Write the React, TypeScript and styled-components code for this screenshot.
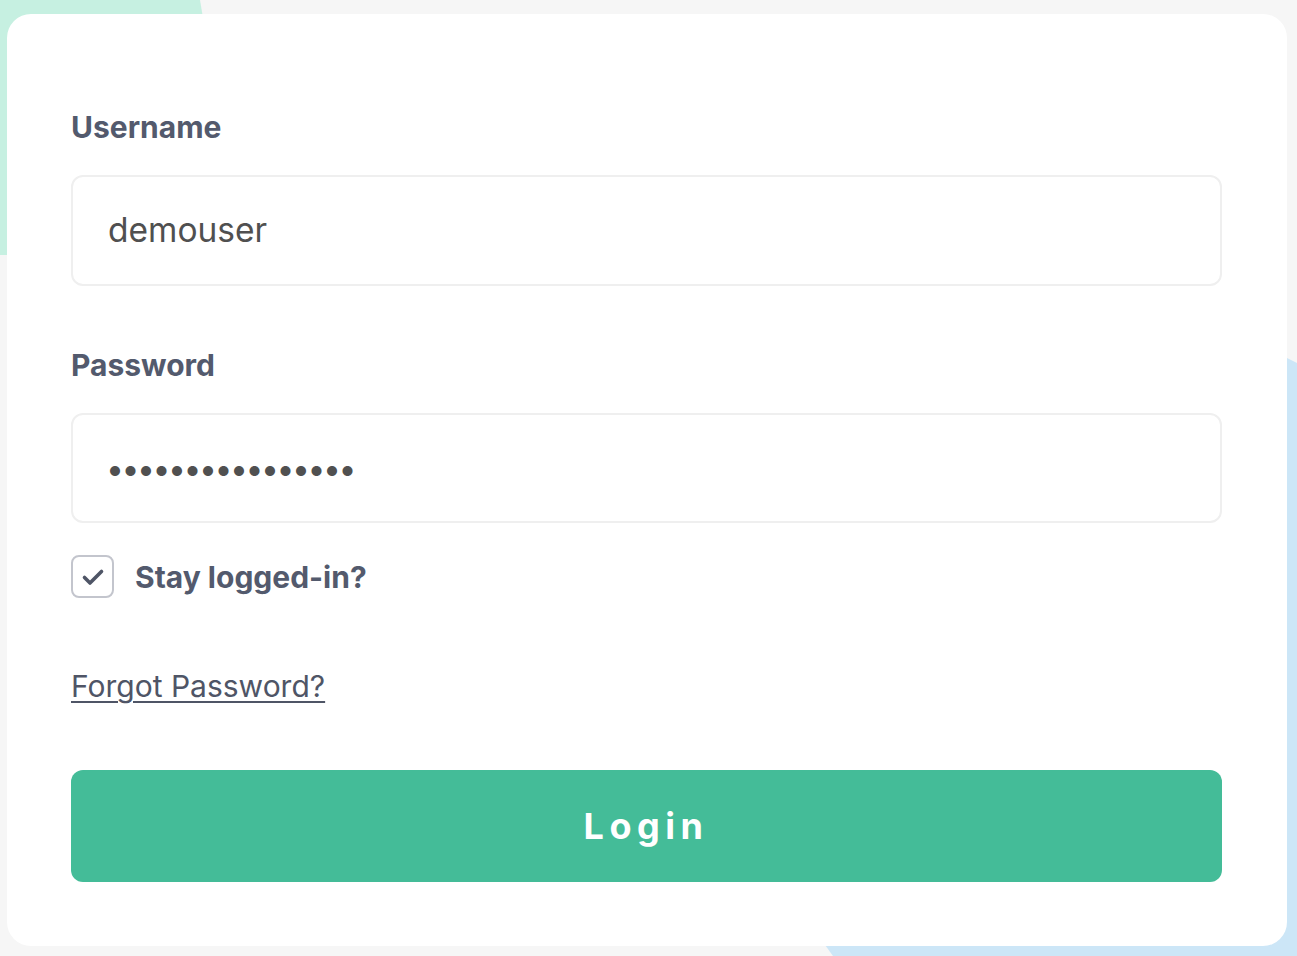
import React from "react";
import styled, { createGlobalStyle } from "styled-components";

const GlobalStyle = createGlobalStyle`
  html, body {
    margin: 0;
    padding: 0;
    background: #f6f6f6;
    font-family: Inter, "Noto Sans", sans-serif;
  }
  * { box-sizing: border-box; }
`;

const Page = styled.div`
  position: relative;
  width: 1297px;
  height: 956px;
  overflow: hidden;
  padding: 14px 10px 10px 7px;
`;

const MintBlob = styled.div`
  position: absolute;
  left: 0;
  top: 0;
  width: 205px;
  height: 255px;
  background: #c6f0e1;
  clip-path: polygon(0 0, 200px 0, 205px 30px, 205px 255px, 0 255px);
`;

const BlueBlob = styled.div`
  position: absolute;
  left: 820px;
  top: 358px;
  width: 477px;
  height: 598px;
  background: #cce6f7;
  clip-path: polygon(467px 0, 477px 5px, 477px 598px, 13px 598px, 0 580px);
`;

const Card = styled.form`
  position: relative;
  width: 1280px;
  height: 932px;
  background: #ffffff;
  border-radius: 24px;
  padding: 95px 65px 64px 64px;
  display: flex;
  flex-direction: column;
`;

const Label = styled.label<{ $top?: number }>`
  display: block;
  margin-top: ${(p) => p.$top ?? 0}px;
  font-size: 30px;
  line-height: 37px;
  font-weight: 700;
  color: #535a6d;
`;

const Field = styled.input`
  display: block;
  width: 100%;
  height: 111px;
  margin-top: 29px;
  border: 2px solid #efefef;
  border-radius: 12px;
  padding: 0 35px;
  font-family: Inter, "Noto Sans", sans-serif;
  font-size: 33.5px;
  color: #505050;
  background: #fff;
  outline: none;

  &[type="password"] {
    font-size: 32px;
    letter-spacing: -2.5px;
    padding-left: 33px;
  }
`;

const CheckRow = styled.label`
  display: flex;
  align-items: center;
  gap: 21px;
  margin-top: 32px;
  font-size: 30px;
  font-weight: 700;
  color: #535a6d;
`;

const CheckBox = styled.span`
  width: 43px;
  height: 43px;
  border: 2px solid #c3c5cd;
  border-radius: 8px;
  display: flex;
  align-items: center;
  justify-content: center;
`;

const ForgotLink = styled.a`
  align-self: flex-start;
  margin-top: 70px;
  font-size: 30px;
  line-height: 36px;
  color: #4f5566;
  text-decoration: underline;
  text-decoration-thickness: 2px;
  text-underline-offset: 4px;
`;

const LoginButton = styled.button`
  margin-top: 66px;
  width: 100%;
  height: 112px;
  border: none;
  border-radius: 12px;
  background: #44bc98;
  color: #ffffff;
  font-family: Inter, "Noto Sans", sans-serif;
  font-size: 36px;
  font-weight: 700;
  letter-spacing: 5.5px;
  padding-left: 5px;
  cursor: pointer;
`;

export default function App() {
  return (
    <>
      <GlobalStyle />
      <Page>
        <MintBlob />
        <BlueBlob />
        <Card onSubmit={(e) => e.preventDefault()}>
          <Label htmlFor="username">Username</Label>
          <Field id="username" type="text" defaultValue="demouser" />
          <Label htmlFor="password" $top={61}>
            Password
          </Label>
          <Field id="password" type="password" defaultValue="demopassword1234" />
          <CheckRow>
            <CheckBox>
              <svg width="26" height="26" viewBox="0 0 26 26" fill="none">
                <path
                  d="M4.5 13.5l5.5 5.5L21.5 7.5"
                  stroke="#4f5566"
                  strokeWidth="3.6"
                  strokeLinecap="round"
                  strokeLinejoin="round"
                />
              </svg>
            </CheckBox>
            Stay logged-in?
          </CheckRow>
          <ForgotLink href="#">Forgot Password?</ForgotLink>
          <LoginButton type="submit">Login</LoginButton>
        </Card>
      </Page>
    </>
  );
}
